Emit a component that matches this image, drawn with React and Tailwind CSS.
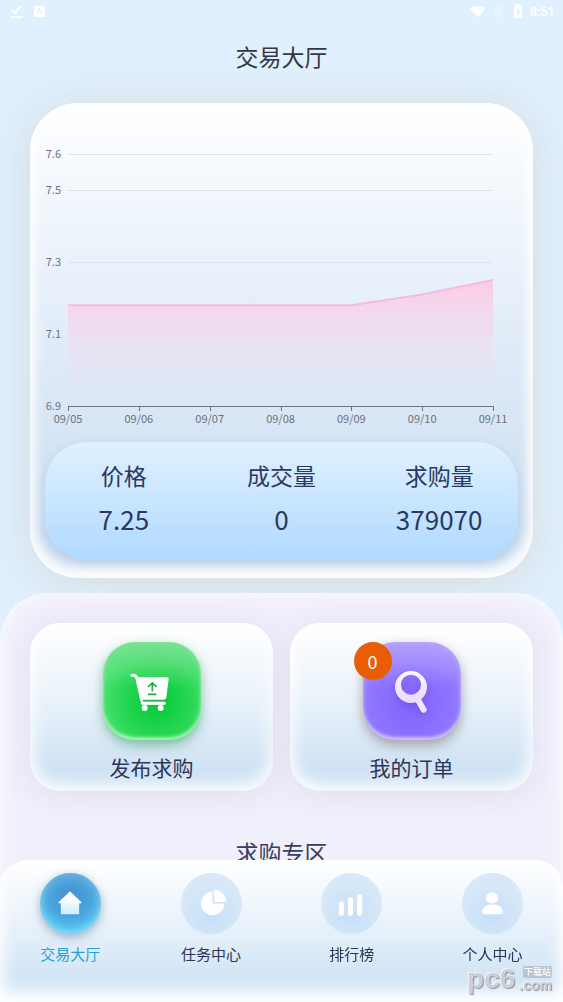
import React from "react";

const prices = [
  { day: "09/05", value: 7.18 },
  { day: "09/06", value: 7.18 },
  { day: "09/07", value: 7.18 },
  { day: "09/08", value: 7.18 },
  { day: "09/09", value: 7.18 },
  { day: "09/10", value: 7.21 },
  { day: "09/11", value: 7.25 },
];

const LEFT = 38;
const RIGHT = 463;
const BASE = 303;
const xAt = (i) => LEFT + ((RIGHT - LEFT) * i) / (prices.length - 1);
const yAt = (v) => BASE - (v - 6.9) * 360;

function StatusBar() {
  return (
    <div className="flex h-6 items-center justify-between px-2 text-white">
      <div className="flex items-center gap-2">
        <svg className="size-4" viewBox="0 0 16 16" fill="none" stroke="currentColor" strokeWidth="2" aria-hidden="true">
          <path d="M4 6l3 3 6-7M3 13h12" />
        </svg>
        <svg className="size-4" viewBox="0 0 16 16" aria-hidden="true">
          <path fill="currentColor" fillRule="evenodd" d="M3 2h9l1 1v10H2V3zM7 4l-3 6h1.500l2-3.500 2 3.500H11L8 4z" />
          <path fill="currentColor" d="M6 8h3v1H6z" />
        </svg>
      </div>
      <div className="flex items-center gap-1">
        <svg className="size-4" viewBox="0 0 16 16" fill="currentColor" aria-hidden="true">
          <path d="M9 13.500L1 5C4 1.200 13 1.200 16 5z" />
        </svg>
        <svg className="size-4 opacity-30" viewBox="0 0 16 16" fill="none" stroke="currentColor" strokeWidth="3" aria-hidden="true">
          <ellipse cx="9" cy="7.500" rx="3.500" ry="4.500" />
          <path d="M6 11l6-7" />
        </svg>
        <svg className="size-4" viewBox="0 0 16 16" fill="currentColor" aria-hidden="true">
          <path fillRule="evenodd" d="M7 0h4v1.500h2V14H5V1.500h2zM10 3L7 8h1.700v4L11.500 7H10z" />
        </svg>
        <span className="font-[Roboto,sans-serif] text-[13px] leading-4 font-medium">8:51</span>
      </div>
    </div>
  );
}

function PriceChart() {
  const line = prices.map((p, i) => `${xAt(i)},${yAt(p.value)}`).join(" ");
  return (
    <svg className="block h-auto w-full" viewBox="0 0 503 339" role="img" aria-label="价格">
      <defs>
        <linearGradient id="area" x1="0" y1="0" x2="0" y2="1">
          <stop offset="0" stopColor="#ffc4e0" stopOpacity="0.85" />
          <stop offset="0.5" stopColor="#f7d3ea" stopOpacity="0.42" />
          <stop offset="1" stopColor="#f0e0f4" stopOpacity="0" />
        </linearGradient>
      </defs>
      {[7.6, 7.5, 7.3, 7.1].map((v) => (
        <line key={v} x1={LEFT} x2={RIGHT} y1={Math.round(yAt(v)) + 0.5} y2={Math.round(yAt(v)) + 0.5} stroke="#dde2eb" />
      ))}
      <polygon points={`${LEFT},${BASE} ${line} ${RIGHT},${BASE}`} fill="url(#area)" />
      <polyline points={line} fill="none" stroke="#f4bbe3" strokeWidth="2" />
      <line x1={LEFT} x2={RIGHT} y1={BASE + 0.5} y2={BASE + 0.5} stroke="#6e7686" />
      <g fill="#6b7180" fontSize="11">
        {[7.6, 7.5, 7.3, 7.1, 6.9].map((v) => (
          <text key={v} x="31" y={yAt(v) + 4} textAnchor="end">{v}</text>
        ))}
        {prices.map((p, i) => (
          <g key={p.day}>
            <line x1={Math.round(xAt(i)) + 0.5} x2={Math.round(xAt(i)) + 0.5} y1={BASE} y2={BASE + 5} stroke="#6e7686" />
            <text x={xAt(i)} y="320" textAnchor="middle">{p.day}</text>
          </g>
        ))}
      </g>
    </svg>
  );
}

const stats = [
  ["价格", "7.25"],
  ["成交量", "0"],
  ["求购量", "379070"],
];

function CartIcon() {
  return (
    <svg className="size-10 overflow-visible" viewBox="126 123 120 120" aria-hidden="true">
      <path d="M126 136q12-1 15 10l13 60q2 12 11 13h56" fill="none" stroke="#fff" strokeWidth="9" strokeLinecap="round" strokeLinejoin="round" />
      <path d="M140 142h92q4 0 4 4l-7 56q-1 7-7 7h-66q-5 0-6-5z" fill="#fff" />
      <path d="M160 213h63" stroke="#2fae55" strokeWidth="5" strokeLinecap="round" />
      <path d="M157 219.500h66" stroke="#fff" strokeWidth="9" strokeLinecap="round" />
      <path d="M187 184v-22M174 171l13-12 13 12M174 193h25" fill="none" stroke="#25a94c" strokeWidth="5" />
      <circle cx="164" cy="234" r="9" fill="#fff" />
      <circle cx="212" cy="234" r="9" fill="#fff" />
    </svg>
  );
}

function SearchIcon() {
  return (
    <svg className="h-11 w-10 drop-shadow-md" viewBox="141 117 120 132" aria-hidden="true">
      <defs>
        <linearGradient id="lens" x1="0" y1="0" x2="0" y2="1">
          <stop offset="0" stopColor="#fbf6ff" />
          <stop offset="1" stopColor="#ead9fd" />
        </linearGradient>
      </defs>
      <path d="M218 208l18 31" stroke="#f0e4fe" strokeWidth="18" strokeLinecap="round" />
      <path fill="url(#lens)" fillRule="evenodd" d="M198 123a48 48 0 1 0 0 96 48 48 0 0 0 0-96zM198 134a30 30 0 1 1 0 60 30 30 0 0 1 0-60z" />
    </svg>
  );
}

function Action({ label, tile, icon, badge }) {
  return (
    <button type="button" className="flex flex-col items-center rounded-[30px] bg-linear-to-b from-white via-[#e7f1fa] via-50% to-[#c6dcf1] pt-[19px] pb-2 shadow-[0_4px_30px_rgba(190,185,200,0.3),inset_0_-5px_16px_3px_rgba(255,255,255,0.95)]">
      <span className={`relative flex size-[98px] items-center justify-center rounded-[32px] ${tile}`}>
        {icon}
        {badge !== undefined && (
          <span className="absolute top-0 -left-[9px] flex size-[38px] items-center justify-center rounded-full bg-[#e95d04] text-lg leading-none text-white">{badge}</span>
        )}
      </span>
      <span className="mt-[11px] text-[21px] leading-8 text-[#2e3759]">{label}</span>
    </button>
  );
}

const idle = "bg-[radial-gradient(circle_at_50%_70%,#c5dff8,#d5e7f8_55%,#dceaf9)]";

const tabs = [
  {
    label: "交易大厅",
    active: true,
    icon: (
      <>
        <defs>
          <linearGradient id="home" x1="0" y1="0" x2="0" y2="1">
            <stop offset="0.3" stopColor="#fff" />
            <stop offset="1" stopColor="#c9eefc" />
          </linearGradient>
        </defs>
        <path d="M29.500 18L41 29v.8H38.500V40.500H20.500V29.800H18V29z" fill="url(#home)" />
      </>
    ),
  },
  {
    label: "任务中心",
    icon: (
      <>
        <path d="M31 18.500A11.500 11.500 0 1 0 42.500 30H31z" fill="#fff" />
        <path d="M32.500 16.500A12 12 0 0 1 44.500 28.500H32.500z" fill="#fff" />
      </>
    ),
  },
  {
    label: "排行榜",
    icon: (
      <g fill="#fff">
        <rect x="17.500" y="28" width="5" height="14" rx="2" />
        <rect x="26.500" y="24" width="5" height="18" rx="2" />
        <rect x="35.500" y="21" width="5" height="21" rx="2" />
      </g>
    ),
  },
  {
    label: "个人中心",
    icon: (
      <g fill="#fff">
        <ellipse cx="29.500" cy="24.500" rx="6" ry="5.500" />
        <path d="M20 38c0-4.500 4-7 10-7s10 2.500 10 7q0 2.500-2 2.500H22q-2 0-2-2.500z" />
      </g>
    ),
  },
];

function TabBar() {
  return (
    <nav className="fixed inset-x-0 bottom-0 grid grid-cols-4 rounded-t-[28px] bg-linear-to-b from-white via-[#e6f0fa] via-50% to-[#c6dff3] pt-[13px] pb-[38px] shadow-[inset_0_-12px_18px_rgba(255,255,255,0.95),inset_0_0_16px_rgba(255,255,255,0.9)]">
      {tabs.map((t) => (
        <a key={t.label} href="#" aria-current={t.active ? "page" : undefined} className="flex flex-col items-center gap-[10px]">
          <span
            className={`size-[61px] rounded-full ${
              t.active
                ? "bg-[radial-gradient(circle_at_50%_35%,#4294d4,#49a5dd_45%,#5acbf3_75%)] shadow-[0_3px_10px_rgba(70,105,140,0.5),inset_0_-3px_5px_rgba(130,225,255,0.7),inset_0_3px_12px_rgba(150,190,230,0.6)]"
                : idle
            }`}
          >
            <svg className="size-full" viewBox="0 0 60 60" aria-hidden="true">{t.icon}</svg>
          </span>
          <span className={`text-[15px] leading-5 ${t.active ? "text-[#22a3d3]" : "text-[#2b3558]"}`}>{t.label}</span>
        </a>
      ))}
    </nav>
  );
}

function Watermark() {
  return (
    <div className="pointer-events-none fixed right-[11px] bottom-[10px] flex items-center gap-1 font-[Liberation_Sans,sans-serif] font-bold text-[#ccd0d6] [text-shadow:1px_1px_1px_#8d949e,-1px_-1px_0_#f3f5f7]">
      <span className="text-[28px] leading-6">pc6</span>
      <span className="flex flex-col items-end">
        <span className="rounded-xs bg-[#bcc3cc] px-px font-['Noto_Sans_CJK_SC',sans-serif] text-[9px] leading-3 font-medium text-white [text-shadow:none]">下载站</span>
        <span className="text-[14px] leading-[14px]">.com</span>
      </span>
    </div>
  );
}

export default function App() {
  return (
    <div className="flex min-h-screen flex-col bg-[#e0f0fe] font-['Noto_Sans_CJK_SC',sans-serif]">
      <StatusBar />
      <h1 className="mt-4 text-center text-[23px] leading-8 text-[#333942]">交易大厅</h1>

      <section className="mx-[30px] mt-[31px] rounded-[48px] bg-linear-to-b from-white via-[#e9f1fb] via-35% to-[#c6daee] pb-[18px] shadow-[0_4px_40px_rgba(205,200,185,0.5),inset_0_-8px_12px_4px_rgba(255,255,255,0.85),inset_0_0_14px_rgba(255,255,255,0.9)]">
        <PriceChart />
        <dl className="mx-[15px] grid grid-cols-3 rounded-[42px] bg-linear-to-b from-[#e0f1fe] to-[#b0d9ff] pt-[15px] pb-[19px] text-center text-[#2c3860] shadow-[0_3px_10px_rgba(150,185,220,0.4)]">
          {stats.map(([name, value]) => (
            <div key={name}>
              <dt className="text-[23px] leading-9">{name}</dt>
              <dd className="mt-1 text-[26px] leading-[44px]">{value}</dd>
            </div>
          ))}
        </dl>
      </section>

      <main className="mt-[15px] flex-1 rounded-t-[48px] bg-[#f0effc] px-[30px] pt-[30px] shadow-[inset_0_0_20px_rgba(255,255,255,0.9)]">
        <div className="grid grid-cols-2 gap-[17px]">
          <Action
            label="发布求购"
            icon={<CartIcon />}
            tile="bg-[linear-gradient(to_bottom,rgba(125,225,150,0.85),rgba(100,220,130,0)_45%),radial-gradient(circle_at_55%_62%,#04c935,#2bd757_45%,#4fe574_75%)] shadow-[0_5px_12px_rgba(60,160,100,0.6),inset_0_-3px_3px_rgba(190,255,205,0.7),inset_0_0_6px_rgba(165,235,180,0.5)]"
          />
          <Action
            label="我的订单"
            icon={<SearchIcon />}
            badge={0}
            tile="bg-[linear-gradient(to_bottom,rgba(185,165,255,0.85),rgba(170,150,255,0)_45%),radial-gradient(circle_at_50%_62%,#8262ff,#8e73ff_50%,#9a83ff_80%)] shadow-[0_5px_12px_rgba(125,115,110,0.6),inset_0_-3px_3px_rgba(225,210,255,0.75),inset_0_0_6px_rgba(200,185,255,0.5)]"
          />
        </div>
        <h2 className="mt-[45px] text-center text-[23px] leading-8 text-[#3a3e5e]">求购专区</h2>
      </main>

      <TabBar />
      <Watermark />
    </div>
  );
}
